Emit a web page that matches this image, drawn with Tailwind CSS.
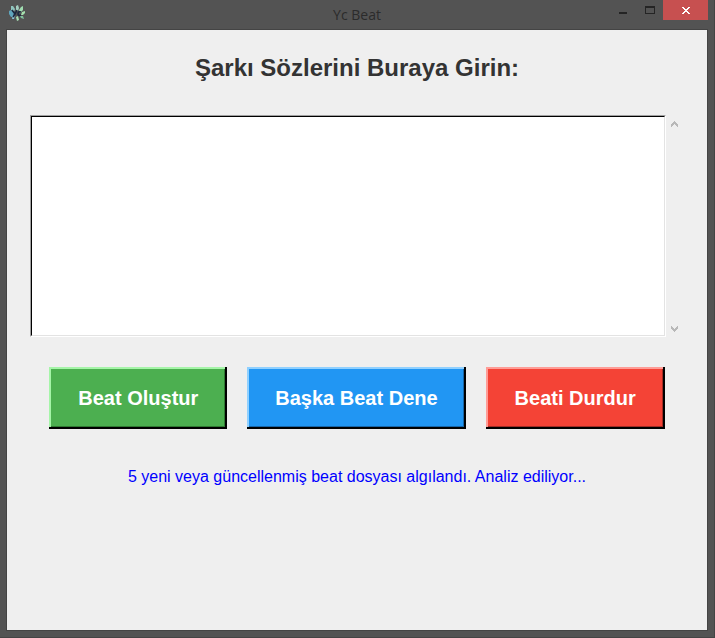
<!DOCTYPE html>
<html lang="tr">
<head>
<meta charset="utf-8">
<meta name="viewport" content="width=device-width, initial-scale=1">
<title>Yc Beat</title>
<script src="https://cdn.jsdelivr.net/npm/@tailwindcss/browser@4"></script>
</head>
<body class="flex min-h-screen flex-col border-r border-b border-[#444444] bg-[#535353] pr-1.5 pb-1.5 pl-1.5 font-['Liberation_Sans',Arial,sans-serif]">
  <header class="grid h-[29px] shrink-0 grid-cols-[1fr_auto_1fr] items-start">
    <svg class="mt-1 ml-0.5 size-[18px]" viewBox="0 0 18 18" aria-hidden="true">
      <path d="M3 2 5 2 7 5 6 8 3 6Z" fill="#8fc4bd"/>
      <path d="M1 7 3 6 6 9 5 13 3 13 1 10Z" fill="#5fa5bd"/>
      <path d="M8 2 10 1 11 4 10 7 8 6Z" fill="#a4cfc0"/>
      <path d="M13 3 15 2 15 6 12 9 11 6Z" fill="#9fdcb0"/>
      <path d="M14 8 17 7 17 9 15 11 13 11Z" fill="#a5e0ae"/>
      <path d="M12 12 15 12 16 15 13 14Z" fill="#7fbf9c"/>
      <path d="M8 13 10 12 11 16 9 17Z" fill="#a9e0b3"/>
      <path d="M5 11 7 11 6 15 4 15Z" fill="#88c3d6"/>
      <path d="M4 6 7 10 9 6M7 10 5 13M13 8Q10 7 10 10 10 12 13 11" fill="none" stroke="#1d2940" stroke-width="1.600"/>
    </svg>
    <h1 class="pt-1 font-['Open_Sans','Noto_Sans',sans-serif] text-sm leading-[22px] text-[#2b2b2b]">Yc Beat</h1>
    <div class="flex justify-end">
      <button type="button" aria-label="Simge durumuna küçült" class="flex h-5 w-[27px] items-center justify-center">
        <svg class="h-5 w-[27px]" viewBox="0 0 27 20" shape-rendering="crispEdges"><path d="M10 12h8v2h-8z" fill="#242424"/></svg>
      </button>
      <button type="button" aria-label="Ekranı kapla" class="flex h-5 w-[27px] items-center justify-center">
        <svg class="h-5 w-[27px]" viewBox="0 0 27 20" shape-rendering="crispEdges"><path fill-rule="evenodd" d="M9 6h10v8H9zM10 8v5h8V8z" fill="#242424"/></svg>
      </button>
      <button type="button" aria-label="Kapat" class="flex h-5 w-[45px] items-center justify-center bg-[#c75050]">
        <svg class="h-5 w-[45px]" viewBox="0 0 45 20" shape-rendering="crispEdges"><path d="M19 7h2v1h1v1h2V8h1V7h2v1h-1v1h-1v1h-1v1h1v1h1v1h1v1h-2v-1h-1v-1h-2v1h-1v1h-2v-1h1v-1h1v-1h1v-1h-1V9h-1V8h-1z" fill="#fff"/></svg>
      </button>
    </div>
  </header>

  <main class="flex grow flex-col border border-[#444444] bg-[#efefef] px-[23px]">
    <label for="lyrics" class="mt-[22px] text-center text-2xl font-bold text-[#333333]">Şarkı Sözlerini Buraya Girin:</label>

    <div class="mt-[31px] flex h-[222px]">
      <div class="grow border border-t-[#a0a0a0] border-r-white border-b-white border-l-[#a0a0a0]">
        <textarea id="lyrics" class="block size-full resize-none overflow-hidden border border-t-black border-r-[#e3e3e3] border-b-[#e3e3e3] border-l-black bg-white p-1 text-base outline-none"></textarea>
      </div>
      <div class="flex w-[18px] flex-col items-end justify-between">
        <button type="button" aria-label="Yukarı kaydır" class="size-[17px]">
          <svg class="size-[17px]" viewBox="0 0 17 17" shape-rendering="crispEdges"><path d="M7 6h1v1h1v1h1v1h1v3h-1v-1h-1v-1h-1V9H7v1H6v1H5v1H4V9h1V8h1V7h1z" fill="#b8b8b8"/></svg>
        </button>
        <button type="button" aria-label="Aşağı kaydır" class="size-[17px]">
          <svg class="size-[17px]" viewBox="0 0 17 17" shape-rendering="crispEdges"><path d="M4 6h1v1h1v1h1v1h1V8h1V7h1V6h1v3h-1v1h-1v1h-1v1H7v-1H6v-1H5V9H4z" fill="#b8b8b8"/></svg>
        </button>
      </div>
    </div>

    <div class="mt-[30px] flex justify-center gap-5 text-xl font-bold text-white">
      <button type="button" class="h-[62px] bg-[#4caf50] px-[29px] shadow-[inset_-2px_-2px_0_#000,inset_2px_2px_0_#a5f5a8,inset_-3px_-3px_0_#2f7a32]">Beat Oluştur</button>
      <button type="button" class="h-[62px] bg-[#2196f3] px-7 shadow-[inset_-2px_-2px_0_#000,inset_2px_2px_0_#8fd0ff,inset_-3px_-3px_0_#1766a8]">Başka Beat Dene</button>
      <button type="button" class="h-[62px] bg-[#f44336] px-[29px] shadow-[inset_-2px_-2px_0_#000,inset_2px_2px_0_#ff9c96,inset_-3px_-3px_0_#a32c24]">Beati Durdur</button>
    </div>

    <p role="status" class="mt-9 text-center text-base text-[#0000ff]">5 yeni veya güncellenmiş beat dosyası algılandı. Analiz ediliyor...</p>
  </main>
</body>
</html>
